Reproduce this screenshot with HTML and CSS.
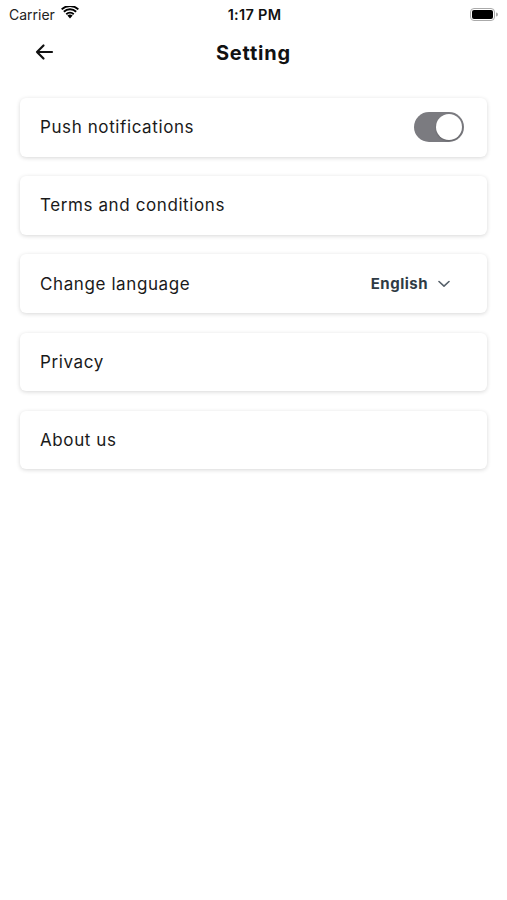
FILE: index.html
```html
<!DOCTYPE html>
<html lang="en">
<head>
  <meta charset="UTF-8" />
  <meta name="viewport" content="width=device-width, initial-scale=1.0" />
  <title>Setting</title>
  <link rel="stylesheet" href="styles.css">
</head>
<body>
  <div class="status-bar">
    <div class="status-left">
      <span>Carrier</span>
      <svg class="wifi" width="18" height="13" viewBox="0 0 18 13">
        <path d="M9 12.5 L6.4 9.6 A3.8 3.8 0 0 1 11.6 9.6 Z" fill="#000"/>
        <path d="M4.6 7.6 A6.4 6.4 0 0 1 13.4 7.6 L12.1 9 A4.5 4.5 0 0 0 5.9 9 Z" fill="#000"/>
        <path d="M2.2 5.1 A9.8 9.8 0 0 1 15.8 5.1 L14.5 6.5 A7.9 7.9 0 0 0 3.5 6.5 Z" fill="#000"/>
        <path d="M0 2.7 A13 13 0 0 1 18 2.7 L16.7 4.1 A11.1 11.1 0 0 0 1.3 4.1 Z" fill="#000"/>
      </svg>
    </div>
    <div class="status-time">1:17 PM</div>
    <div class="status-right">
      <svg width="28" height="13" viewBox="0 0 28 13">
        <rect x="0.5" y="0.5" width="24" height="12" rx="3.5" fill="none" stroke="#aaa"/>
        <rect x="2" y="2" width="21" height="9" rx="2" fill="#000"/>
        <path d="M26 4.5 a1.5 1.5 0 0 1 0 4 Z" fill="#aaa"/>
      </svg>
    </div>
  </div>

  <header class="top-bar">
    <button class="back-btn" aria-label="Back">
      <svg width="20" height="18" viewBox="0 0 20 18">
        <path d="M18 9 H3 M9.5 2.5 L3 9 L9.5 15.5" fill="none" stroke="#111" stroke-width="2.2" stroke-linecap="round" stroke-linejoin="round"/>
      </svg>
    </button>
    <h1>Setting</h1>
  </header>

  <main class="settings">
    <div class="setting-item">
      <span>Push notifications</span>
      <div class="toggle"><div class="knob"></div></div>
    </div>
    <div class="setting-item">
      <span>Terms and conditions</span>
    </div>
    <div class="setting-item">
      <span>Change language</span>
      <div class="lang">
        English
        <svg width="12" height="8" viewBox="0 0 12 8">
          <path d="M1 1.5 L6 6.2 L11 1.5" fill="none" stroke="#56606a" stroke-width="1.6" stroke-linecap="round" stroke-linejoin="round"/>
        </svg>
      </div>
    </div>
    <div class="setting-item">
      <span>Privacy</span>
    </div>
    <div class="setting-item">
      <span>About us</span>
    </div>
  </main>
</body>
</html>
```

FILE: styles.css
```css
* { box-sizing: border-box; margin: 0; padding: 0; }
body { font-family: Inter, 'Noto Sans', sans-serif; background: #fff; color: #111; width: 507px; height: 900px; }

.status-bar { height: 28px; display: flex; align-items: center; justify-content: space-between; padding: 0 9px 0 9px; font-family: Inter, sans-serif; font-size: 14px; }
.status-left { display: flex; align-items: center; gap: 6px; width: 120px; color: #222; }
.status-left .wifi { margin-top: -3px; }
.status-time { font-weight: 600; color: #111; margin-left: 2px; font-size: 14.5px; letter-spacing: 0.3px; }
.status-right { width: 120px; display: flex; justify-content: flex-end; }

.top-bar { position: relative; height: 50px; display: flex; align-items: center; justify-content: center; }
.top-bar h1 { font-size: 20px; font-weight: 700; letter-spacing: 0.8px; margin-top: -1px; }
.back-btn { position: absolute; left: 34px; top: 15px; background: none; border: none; cursor: pointer; }

.settings { padding: 20px 20px 0 20px; display: flex; flex-direction: column; gap: 19.6px; }
.setting-item { height: 58.6px; background: #fff; border-radius: 6px; box-shadow: 0 1px 4px rgba(0,0,0,0.16); display: flex; align-items: center; justify-content: space-between; padding: 0 23px 0 20px; font-size: 17px; letter-spacing: 0.6px; color: #1a1a1a; }

.toggle { width: 50px; height: 30px; background: #7b7b80; border-radius: 15px; position: relative; }
.toggle .knob { position: absolute; right: 2px; top: 2px; width: 26px; height: 26px; border-radius: 50%; background: #fff; box-shadow: 0 1px 2px rgba(0,0,0,0.2); }

.lang { display: flex; align-items: center; gap: 10px; font-size: 15px; font-weight: 700; letter-spacing: 0.5px; color: #2e3a44; margin-right: 14px; }
```
